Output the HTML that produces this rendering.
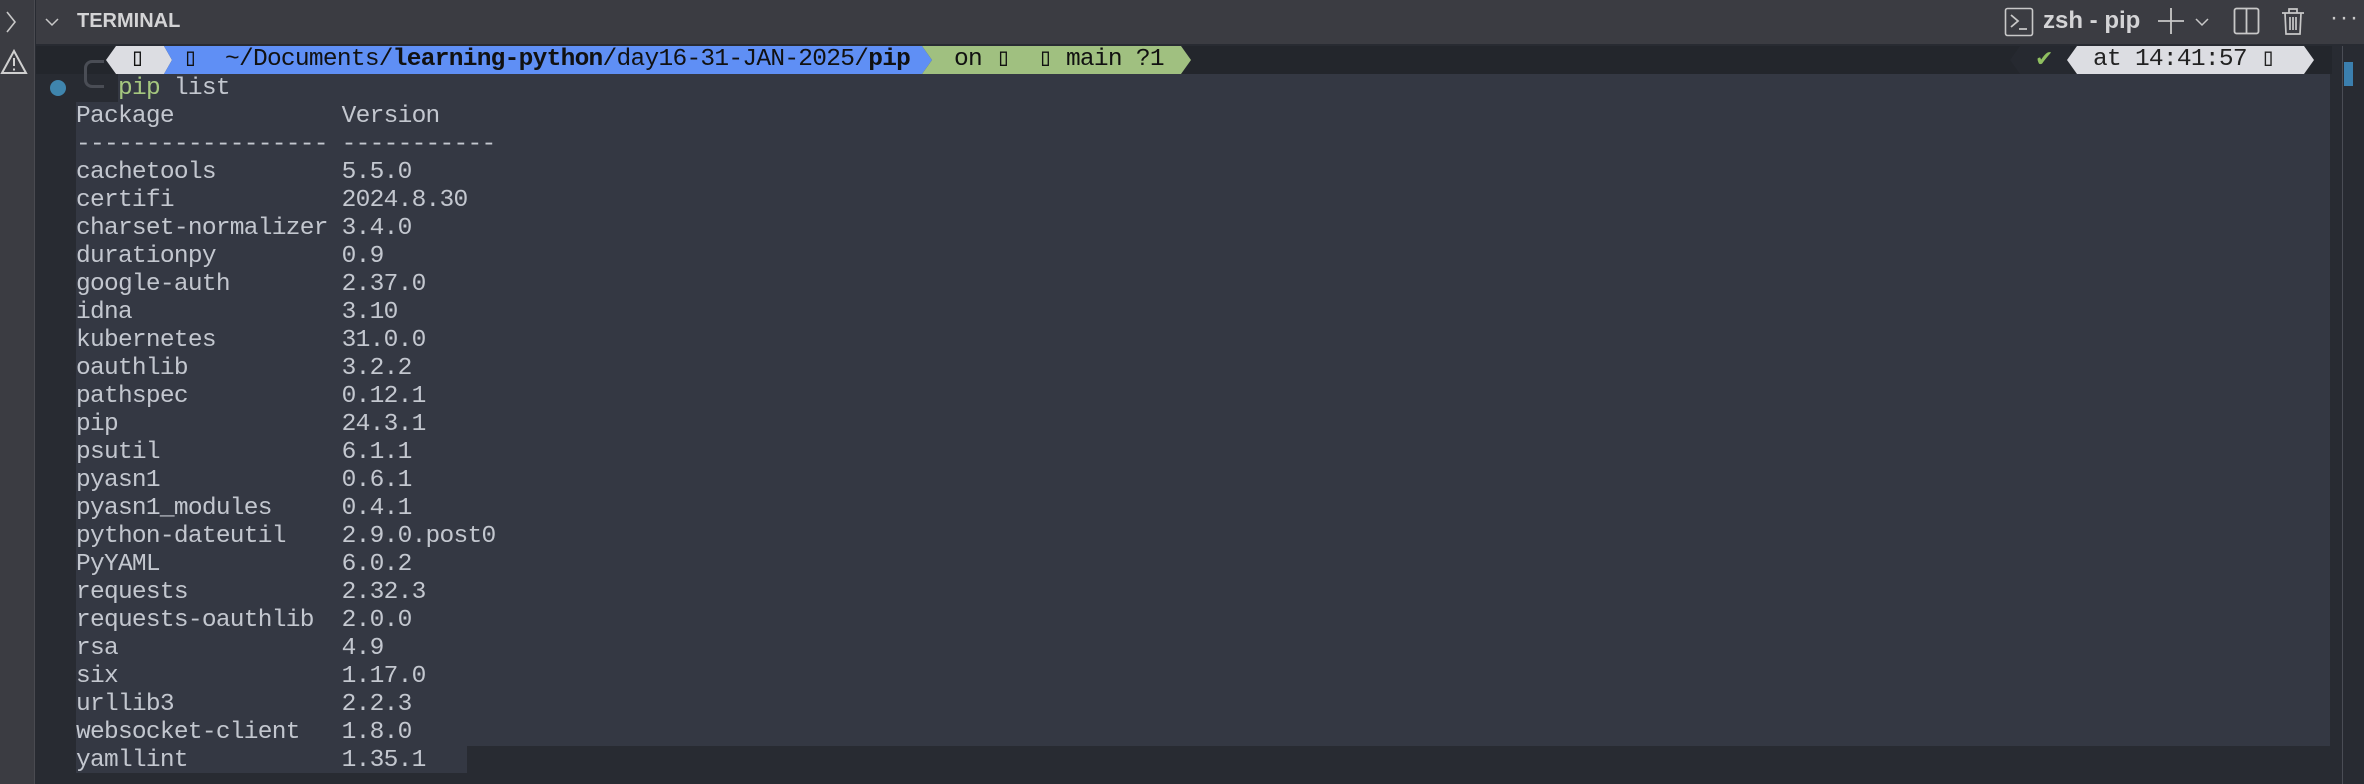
<!DOCTYPE html>
<html><head><meta charset="utf-8"><style>
*{margin:0;padding:0;box-sizing:border-box}
body{width:2364px;height:784px;background:#282b32;position:relative;overflow:hidden;font-family:"Liberation Mono",monospace;color:#c3c7cf}
.abs{position:absolute}
#side{left:0;top:0;width:35px;height:784px;background:#3b3c42;border-right:1px solid #4a4b51}
#hdr{left:36px;top:0;width:2328px;height:44px;background:#3b3c42}
.sel{background:#343843}
.mono{font-size:24.5px;line-height:28px;white-space:pre;letter-spacing:-0.72px}
.hb{font-family:"Liberation Sans",sans-serif;font-weight:bold;color:#d4d4d6}
</style></head><body>
<div class="abs" id="side"></div>
<div class="abs" id="hdr"></div>
<svg class="abs" style="left:5px;top:10px" width="12" height="24"><path d="M2 2 L10 12 L2 22" stroke="#c8c8c8" stroke-width="1.6" fill="none"/></svg>
<svg class="abs" style="left:0px;top:48px" width="30" height="30"><path d="M14 3 L26 25 L2 25 Z" stroke="#d0d0d0" stroke-width="2" fill="none"/><path d="M14 10 V18 M14 20.5 V22.5" stroke="#d0d0d0" stroke-width="2"/></svg>
<svg class="abs" style="left:44px;top:14px" width="16" height="16"><path d="M2 5 L8 11 L14 5" stroke="#c8c8c8" stroke-width="1.5" fill="none"/></svg>
<div class="abs hb" style="left:77px;top:10px;font-size:20px">TERMINAL</div>
<svg class="abs" style="left:2004px;top:7px" width="30" height="30"><rect x="1.5" y="1.5" width="27" height="27" rx="2" stroke="#c8c8c8" stroke-width="1.6" fill="none"/><path d="M7 8 L14 14 L7 20 M15 22 H23" stroke="#c8c8c8" stroke-width="1.8" fill="none"/></svg>
<div class="abs hb" style="left:2043px;top:7px;font-size:24px">zsh - pip</div>
<svg class="abs" style="left:2156px;top:6px" width="60" height="30"><path d="M15 2 V28 M2 15 H28" stroke="#c8c8c8" stroke-width="1.8"/><path d="M40 13 L46 19 L52 13" stroke="#c8c8c8" stroke-width="1.5" fill="none"/></svg>
<svg class="abs" style="left:2233px;top:7px" width="28" height="28"><rect x="1.5" y="1.5" width="24" height="25" rx="2" stroke="#c8c8c8" stroke-width="1.8" fill="none"/><path d="M13.5 2 V27" stroke="#c8c8c8" stroke-width="1.8"/></svg>
<svg class="abs" style="left:2281px;top:6px" width="24" height="30"><path d="M1 7 H23 M8 7 V3 H16 V7 M4 7 L5 28 H19 L20 7 M9 11 V24 M12 11 V24 M15 11 V24" stroke="#c8c8c8" stroke-width="1.7" fill="none"/></svg>
<div class="abs" style="left:2330px;top:4px;font-size:24px;color:#c8c8c8;font-family:'Liberation Sans',sans-serif;letter-spacing:2px">···</div>
<!-- prompt bar -->
<div class="abs" style="left:36px;top:46px;width:2296px;height:28px;background:#23262c"></div>
<svg class="abs" style="left:106px;top:46px" width="1090" height="28">
<polygon points="0,14 10,0 58,0 66,14 58,28 10,28" fill="#dcdde2"/>
<polygon points="58,0 816,0 826,14 816,28 58,28 66,14" fill="#5f8ff5"/>
<polygon points="816,0 1075,0 1085,14 1075,28 816,28 826,14" fill="#a0c080"/>
</svg>
<div class="abs mono" style="left:130px;top:46px;color:#111">▯</div>
<div class="abs mono" style="left:183px;top:46px;color:#111">▯  ~/Documents/<b>learning-python</b>/day16-31-JAN-2025/<b>pip</b></div>
<div class="abs mono" style="left:954px;top:46px;color:#111">on ▯  ▯ main ?1</div>
<svg class="abs" style="left:2010px;top:46px" width="310" height="28">
<polygon points="0,14 10,0 60,0 60,28 10,28" fill="#262930"/>
<polygon points="57,14 67,0 294,0 304,14 294,28 67,28" fill="#dcdde2"/>
</svg>
<div class="abs" style="left:2035px;top:47px;font-size:22px;color:#8fbf60;font-family:'DejaVu Sans',sans-serif">✔</div>
<div class="abs mono" style="left:2093px;top:46px;color:#222">at 14:41:57 ▯</div>
<!-- right scrollbar -->
<div class="abs" style="left:2342px;top:46px;width:1px;height:738px;background:#4a4d55"></div>
<div class="abs" style="left:2344px;top:62px;width:9px;height:24px;background:#3b7fae"></div>
<!-- selection areas -->
<div class="abs sel" style="left:118px;top:74px;width:2212px;height:28px"></div>
<div class="abs sel" style="left:76px;top:102px;width:2254px;height:644px"></div>
<div class="abs sel" style="left:76px;top:746px;width:391px;height:27px"></div>
<div class="abs" style="left:50px;top:80px;width:16px;height:16px;border-radius:50%;background:#3f85ad"></div>
<div class="abs" style="left:84px;top:60px;width:20px;height:28px;border:3px solid #4a4d55;border-right:none;border-radius:8px 0 0 8px"></div>
<div class="abs mono" style="left:118px;top:75px"><span style="color:#a5c77f">pip</span> list</div>
<div class="abs mono" style="left:76px;top:103px">Package            Version
------------------ -----------
cachetools         5.5.0
certifi            2024.8.30
charset-normalizer 3.4.0
durationpy         0.9
google-auth        2.37.0
idna               3.10
kubernetes         31.0.0
oauthlib           3.2.2
pathspec           0.12.1
pip                24.3.1
psutil             6.1.1
pyasn1             0.6.1
pyasn1_modules     0.4.1
python-dateutil    2.9.0.post0
PyYAML             6.0.2
requests           2.32.3
requests-oauthlib  2.0.0
rsa                4.9
six                1.17.0
urllib3            2.2.3
websocket-client   1.8.0
yamllint           1.35.1</div>
</body></html>
